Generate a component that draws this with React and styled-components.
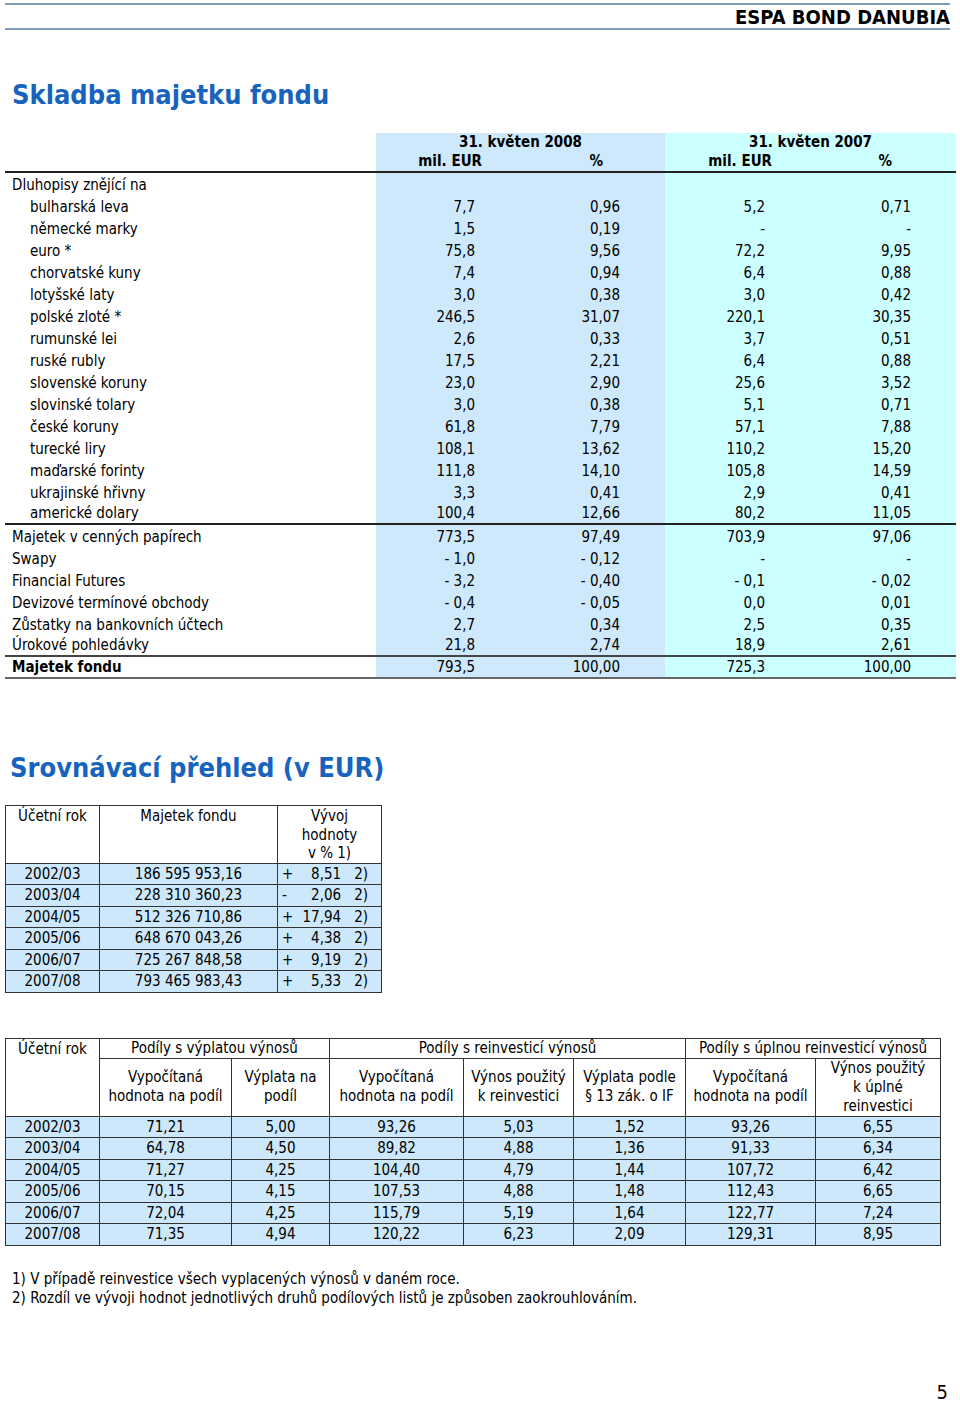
import React from "react";
import styled, { createGlobalStyle } from "styled-components";

const GlobalStyle = createGlobalStyle`
  html, body { margin: 0; padding: 0; background: #fff; }
  html { overflow: hidden; }
  body {
    font-family: "DejaVu Sans Condensed", "DejaVu Sans", "Noto Sans", sans-serif;
    color: #000;
  }
`;

const Page = styled.div`
  width: 960px;
  padding: 3px 0 0 5px;
  box-sizing: border-box;
`;

const HeaderBar = styled.div`
  width: 945px;
  border-top: 2px solid #7f9dbb;
  border-bottom: 2px solid #7f9dbb;
  height: 23px;
  display: flex;
  justify-content: flex-end;
  align-items: center;
  font-weight: bold;
  font-size: 20px;
`;

const SectionTitle = styled.h1`
  margin: ${(p) => p.$mt}px 0 0 ${(p) => p.$ml}px;
  font-size: 27px;
  line-height: 34px;
  font-weight: bold;
  color: #1763bd;
`;

const AssetTable = styled.table`
  margin-top: 21px;
  width: 951px;
  table-layout: fixed;
  border-collapse: collapse;
  font-size: 15px;
`;

const shade = { blue: "#cde9fb", cyan: "#ccffff" };

const HeadCell = styled.th`
  padding: 0 ${(p) => p.$pr || 0}px 0 0;
  height: 19px;
  line-height: 19px;
  font-weight: bold;
  text-align: ${(p) => p.$align || "center"};
  background: ${(p) => (p.$bg ? shade[p.$bg] : "transparent")};
  border-bottom: ${(p) => (p.$rule ? "2px solid #222" : "none")};
`;

const AssetRow = styled.tr`
  & > td {
    border-bottom: ${(p) => (p.$rule ? `2px solid ${p.$rule}` : "none")};
  }
`;

const LabelCell = styled.td`
  padding: 0 0 0 ${(p) => (p.$indent ? 25 : 7)}px;
  height: ${(p) => (p.$rule ? 20 : 22)}px;
  line-height: 20px;
  white-space: nowrap;
  font-weight: ${(p) => (p.$bold ? "bold" : "normal")};
  vertical-align: bottom;
`;

const NumCell = styled.td`
  padding: 0 45px 0 0;
  line-height: 20px;
  text-align: right;
  background: ${(p) => shade[p.$bg]};
  vertical-align: bottom;
`;

const GridTable = styled.table`
  margin-top: ${(p) => p.$mt}px;
  width: ${(p) => p.$w}px;
  table-layout: fixed;
  border-collapse: collapse;
  font-size: 15px;
  border: 1px solid #333;
`;

const GridHead = styled.th`
  border: 1px solid #333;
  font-weight: normal;
  padding: ${(p) => (p.$top ? "1px 0 0" : "0")};
  line-height: ${(p) => p.$lh || 19}px;
  height: ${(p) => p.$h}px;
  vertical-align: ${(p) => (p.$top ? "top" : "middle")};
  text-align: center;
`;

const GridCell = styled.td`
  border: 1px solid #333;
  background: #cce8fa;
  height: 20.5px;
  line-height: 20px;
  padding: 0;
  text-align: center;
`;

const VyvojBox = styled.div`
  display: flex;
  align-items: center;
  padding: 0 13px 0 4px;
`;

const Sign = styled.span`
  width: 12px;
  text-align: left;
`;

const Value = styled.span`
  flex: 1;
  text-align: right;
`;

const Note = styled.span`
  margin-left: 13px;
`;

const Footnotes = styled.div`
  margin: 24px 0 0 7px;
  font-size: 15px;
  line-height: 19px;
`;

const PageNumber = styled.div`
  margin-top: 74px;
  width: 943px;
  text-align: right;
  font-size: 20px;
  line-height: 20px;
`;

const assets = [
  { label: "Dluhopisy znějící na", v: ["", "", "", ""] },
  { label: "bulharská leva", indent: true, v: ["7,7", "0,96", "5,2", "0,71"] },
  { label: "německé marky", indent: true, v: ["1,5", "0,19", "-", "-"] },
  { label: "euro *", indent: true, v: ["75,8", "9,56", "72,2", "9,95"] },
  { label: "chorvatské kuny", indent: true, v: ["7,4", "0,94", "6,4", "0,88"] },
  { label: "lotyšské laty", indent: true, v: ["3,0", "0,38", "3,0", "0,42"] },
  { label: "polské zloté *", indent: true, v: ["246,5", "31,07", "220,1", "30,35"] },
  { label: "rumunské lei", indent: true, v: ["2,6", "0,33", "3,7", "0,51"] },
  { label: "ruské rubly", indent: true, v: ["17,5", "2,21", "6,4", "0,88"] },
  { label: "slovenské koruny", indent: true, v: ["23,0", "2,90", "25,6", "3,52"] },
  { label: "slovinské tolary", indent: true, v: ["3,0", "0,38", "5,1", "0,71"] },
  { label: "české koruny", indent: true, v: ["61,8", "7,79", "57,1", "7,88"] },
  { label: "turecké liry", indent: true, v: ["108,1", "13,62", "110,2", "15,20"] },
  { label: "maďarské forinty", indent: true, v: ["111,8", "14,10", "105,8", "14,59"] },
  { label: "ukrajinské hřivny", indent: true, v: ["3,3", "0,41", "2,9", "0,41"] },
  { label: "americké dolary", indent: true, rule: "#222", v: ["100,4", "12,66", "80,2", "11,05"] },
  { label: "Majetek v cenných papírech", v: ["773,5", "97,49", "703,9", "97,06"] },
  { label: "Swapy", v: ["- 1,0", "- 0,12", "-", "-"] },
  { label: "Financial Futures", v: ["- 3,2", "- 0,40", "- 0,1", "- 0,02"] },
  { label: "Devizové termínové obchody", v: ["- 0,4", "- 0,05", "0,0", "0,01"] },
  { label: "Zůstatky na bankovních účtech", v: ["2,7", "0,34", "2,5", "0,35"] },
  { label: "Úrokové pohledávky", rule: "#444", v: ["21,8", "2,74", "18,9", "2,61"] },
  { label: "Majetek fondu", bold: true, rule: "#666", v: ["793,5", "100,00", "725,3", "100,00"] },
];

const colBg = ["blue", "blue", "cyan", "cyan"];

const history = [
  ["2002/03", "186 595 953,16", "+", "8,51"],
  ["2003/04", "228 310 360,23", "-", "2,06"],
  ["2004/05", "512 326 710,86", "+", "17,94"],
  ["2005/06", "648 670 043,26", "+", "4,38"],
  ["2006/07", "725 267 848,58", "+", "9,19"],
  ["2007/08", "793 465 983,43", "+", "5,33"],
];

const shares = [
  ["2002/03", "71,21", "5,00", "93,26", "5,03", "1,52", "93,26", "6,55"],
  ["2003/04", "64,78", "4,50", "89,82", "4,88", "1,36", "91,33", "6,34"],
  ["2004/05", "71,27", "4,25", "104,40", "4,79", "1,44", "107,72", "6,42"],
  ["2005/06", "70,15", "4,15", "107,53", "4,88", "1,48", "112,43", "6,65"],
  ["2006/07", "72,04", "4,25", "115,79", "5,19", "1,64", "122,77", "7,24"],
  ["2007/08", "71,35", "4,94", "120,22", "6,23", "2,09", "129,31", "8,95"],
];

export default function App() {
  return (
    <Page>
      <GlobalStyle />
      <HeaderBar>ESPA BOND DANUBIA</HeaderBar>

      <SectionTitle $mt={48} $ml={7}>Skladba majetku fondu</SectionTitle>

      <AssetTable>
        <colgroup>
          <col style={{ width: 371 }} />
          <col style={{ width: 144 }} />
          <col style={{ width: 145 }} />
          <col style={{ width: 145 }} />
          <col style={{ width: 146 }} />
        </colgroup>
        <thead>
          <tr>
            <HeadCell />
            <HeadCell colSpan={2} $bg="blue">31. květen 2008</HeadCell>
            <HeadCell colSpan={2} $bg="cyan">31. květen 2007</HeadCell>
          </tr>
          <tr>
            <HeadCell $rule />
            <HeadCell $rule $bg="blue" $align="right" $pr={38}>mil. EUR</HeadCell>
            <HeadCell $rule $bg="blue" $align="right" $pr={62}>%</HeadCell>
            <HeadCell $rule $bg="cyan" $align="right" $pr={38}>mil. EUR</HeadCell>
            <HeadCell $rule $bg="cyan" $align="right" $pr={64}>%</HeadCell>
          </tr>
        </thead>
        <tbody>
          {assets.map((a) => (
            <AssetRow key={a.label} $rule={a.rule}>
              <LabelCell $indent={a.indent} $bold={a.bold} $rule={a.rule}>
                {a.label}
              </LabelCell>
              {a.v.map((val, i) => (
                <NumCell key={i} $bg={colBg[i]}>{val}</NumCell>
              ))}
            </AssetRow>
          ))}
        </tbody>
      </AssetTable>

      <SectionTitle $mt={72} $ml={5}>Srovnávací přehled (v EUR)</SectionTitle>

      <GridTable $mt={20} $w={376}>
        <colgroup>
          <col style={{ width: 94 }} />
          <col style={{ width: 178 }} />
          <col style={{ width: 104 }} />
        </colgroup>
        <thead>
          <tr>
            <GridHead $top $h={54} $lh={18.5}>Účetní rok</GridHead>
            <GridHead $top $h={54} $lh={18.5}>Majetek fondu</GridHead>
            <GridHead $top $h={54} $lh={18.5}>
              Vývoj
              <br />
              hodnoty
              <br />v % 1)
            </GridHead>
          </tr>
        </thead>
        <tbody>
          {history.map(([year, amount, sign, val]) => (
            <tr key={year}>
              <GridCell>{year}</GridCell>
              <GridCell>{amount}</GridCell>
              <GridCell>
                <VyvojBox>
                  <Sign>{sign}</Sign>
                  <Value>{val}</Value>
                  <Note>2)</Note>
                </VyvojBox>
              </GridCell>
            </tr>
          ))}
        </tbody>
      </GridTable>

      <GridTable $mt={45} $w={935}>
        <colgroup>
          <col style={{ width: 94 }} />
          <col style={{ width: 132 }} />
          <col style={{ width: 98 }} />
          <col style={{ width: 134 }} />
          <col style={{ width: 110 }} />
          <col style={{ width: 112 }} />
          <col style={{ width: 130 }} />
          <col style={{ width: 125 }} />
        </colgroup>
        <thead>
          <tr>
            <GridHead rowSpan={2} $top $h={19}>Účetní rok</GridHead>
            <GridHead colSpan={2} $h={19}>Podíly s výplatou výnosů</GridHead>
            <GridHead colSpan={3} $h={19}>Podíly s reinvesticí výnosů</GridHead>
            <GridHead colSpan={2} $h={19}>Podíly s úplnou reinvesticí výnosů</GridHead>
          </tr>
          <tr>
            <GridHead $h={55}>Vypočítaná<br />hodnota na podíl</GridHead>
            <GridHead $h={55}>Výplata na<br />podíl</GridHead>
            <GridHead $h={55}>Vypočítaná<br />hodnota na podíl</GridHead>
            <GridHead $h={55}>Výnos použitý<br />k reinvestici</GridHead>
            <GridHead $h={55}>Výplata podle<br />§ 13 zák. o IF</GridHead>
            <GridHead $h={55}>Vypočítaná<br />hodnota na podíl</GridHead>
            <GridHead $h={55}>Výnos použitý<br />k úplné<br />reinvestici</GridHead>
          </tr>
        </thead>
        <tbody>
          {shares.map((row) => (
            <tr key={row[0]}>
              {row.map((c, i) => (
                <GridCell key={i}>{c}</GridCell>
              ))}
            </tr>
          ))}
        </tbody>
      </GridTable>

      <Footnotes>
        <div>1) V případě reinvestice všech vyplacených výnosů v daném roce.</div>
        <div>2) Rozdíl ve vývoji hodnot jednotlivých druhů podílových listů je způsoben zaokrouhlováním.</div>
      </Footnotes>

      <PageNumber>5</PageNumber>
    </Page>
  );
}
